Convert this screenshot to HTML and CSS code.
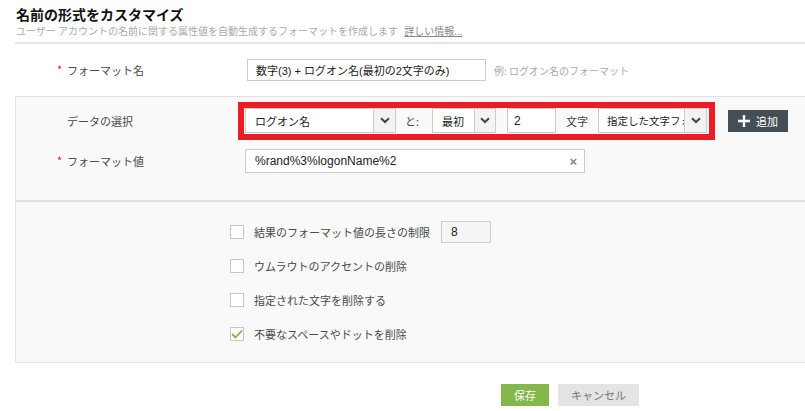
FILE: index.html
```html
<!DOCTYPE html>
<html lang="ja">
<head>
<meta charset="utf-8">
<title>名前の形式をカスタマイズ</title>
<link rel="stylesheet" href="styles.css">
</head>
<body>
<div class="page">
  <div class="header">
    <h1 class="title">名前の形式をカスタマイズ</h1>
    <p class="subtitle">ユーザー アカウントの名前に関する属性値を自動生成するフォーマットを作成します <a class="more" href="#">詳しい情報...</a></p>
  </div>

  <div class="row row-name">
    <label class="label"><span class="req">*</span>フォーマット名</label>
    <div class="textbox name-box">数字(3) + ログオン名(最初の2文字のみ)</div>
    <span class="hint">例: ログオン名のフォーマット</span>
  </div>

  <div class="panel">
    <div class="section section-top">
      <div class="prow">
        <label class="label">データの選択</label>
        <div class="highlight">
          <div class="select sel-attr"><span class="sel-text">ログオン名</span><span class="arrow"><svg width="10" height="7" viewBox="0 0 10 7"><path d="M1 1.2 L5 5 L9 1.2" fill="none" stroke="#444" stroke-width="2"/></svg></span></div>
          <span class="word to">と:</span>
          <div class="select sel-pos"><span class="sel-text">最初</span><span class="arrow"><svg width="10" height="7" viewBox="0 0 10 7"><path d="M1 1.2 L5 5 L9 1.2" fill="none" stroke="#444" stroke-width="2"/></svg></span></div>
          <div class="textbox num-box">2</div>
          <span class="word">文字</span>
          <div class="select sel-mode"><span class="sel-text">指定した文字フォーマット</span><span class="arrow"><svg width="10" height="7" viewBox="0 0 10 7"><path d="M1 1.2 L5 5 L9 1.2" fill="none" stroke="#444" stroke-width="2"/></svg></span></div>
        </div>
        <button class="add-btn"><svg width="12" height="12" viewBox="0 0 12 12"><path d="M6 0 V12 M0 6 H12" stroke="#fff" stroke-width="2.4"/></svg>追加</button>
      </div>
      <div class="prow prow-value">
        <label class="label"><span class="req">*</span>フォーマット値</label>
        <div class="textbox value-box"><span>%rand%3%logonName%2</span><span class="clear">×</span></div>
      </div>
    </div>

    <div class="section section-opts">
      <div class="opt">
        <span class="check"></span>
        <span class="opt-text">結果のフォーマット値の長さの制限</span>
        <div class="textbox len-box">8</div>
      </div>
      <div class="opt">
        <span class="check"></span>
        <span class="opt-text">ウムラウトのアクセントの削除</span>
      </div>
      <div class="opt">
        <span class="check"></span>
        <span class="opt-text">指定された文字を削除する</span>
      </div>
      <div class="opt">
        <span class="check checked"><svg width="12" height="10" viewBox="0 0 12 10"><path d="M1 5 L4.5 8.5 L11 1.5" fill="none" stroke="#7ab648" stroke-width="1.8"/></svg></span>
        <span class="opt-text">不要なスペースやドットを削除</span>
      </div>
    </div>
  </div>

  <div class="actions">
    <button class="btn save">保存</button>
    <button class="btn cancel">キャンセル</button>
  </div>
</div>
</body>
</html>
```

FILE: styles.css
```css
* { box-sizing: border-box; }
html, body { margin: 0; padding: 0; background: #fff; overflow: hidden; }
body {
  font-family: "Open Sans", "Noto Sans CJK JP", sans-serif;
  color: #333;
  width: 805px;
  height: 411px;
}
.page { padding-left: 15px; }

.header { border-bottom: 2px solid #e6e6e6; padding: 4px 0 4px 1px; }
.title {
  margin: 0;
  font-size: 14px;
  line-height: 20px;
  font-weight: bold;
  color: #111;
  font-family: "Noto Sans CJK JP", sans-serif;
}
.subtitle {
  margin: 0;
  font-size: 10px;
  line-height: 14px;
  color: #aaa;
  font-family: "Noto Sans CJK JP", sans-serif;
}
.more { color: #888; text-decoration: underline; margin-left: 4px; }

.label {
  font-size: 11px;
  color: #4a4a4a;
  font-family: "Noto Sans CJK JP", sans-serif;
  position: relative;
}
.req {
  color: #e0202a;
  position: absolute;
  left: -10px;
  top: -1px;
}

.textbox {
  background: #fff;
  border: 1px solid #ccc;
  font-size: 12px;
  color: #222;
  display: flex;
  align-items: center;
  padding-left: 9px;
  font-family: "Liberation Sans", "Noto Sans CJK JP", sans-serif;
}

.row-name {
  display: flex;
  align-items: center;
  margin-top: 15px;
  height: 22px;
}
.row-name .label { margin-left: 52px; width: 180px; }
.name-box { width: 239px; height: 22px; padding-left: 8px; font-size: 11px; white-space: nowrap; }
.hint { margin-left: 8px; font-size: 10px; color: #aaa; font-family: "Noto Sans CJK JP", sans-serif; }

.panel {
  margin-top: 15px;
  background: #f9f9f9;
  border: 1px solid #e2e2e2;
  border-right: none;
}
.section-top { padding: 5px 0 27px; border-bottom: 2px solid #e2e2e2; }

.prow { display: flex; align-items: center; }
.prow .label { margin-left: 51px; width: 171px; }
.prow-value { margin-top: 9px; }
.prow-value .label { width: 178px; }

.highlight {
  display: flex;
  align-items: center;
  border: 6px solid #ec1c24;
  padding: 0 2px 1px 1px;
  background: #f9f9f9;
}
.select {
  height: 25px;
  background: #fff;
  border: 1px solid #ccc;
  display: flex;
  align-items: stretch;
  font-size: 11px;
  color: #222;
  font-family: "Noto Sans CJK JP", sans-serif;
}
.sel-text {
  flex: 1;
  display: flex;
  align-items: center;
  padding-left: 9px;
  overflow: hidden;
  white-space: nowrap;
}
.arrow {
  flex: none;
  width: 22px;
  background: #f3f3f3;
  border-left: 1px solid #ccc;
  display: flex;
  align-items: center;
  justify-content: center;
}
.sel-attr { width: 151px; }
.sel-pos { width: 64px; }
.sel-pos .arrow { width: 21px; }
.sel-mode { width: 109px; }
.sel-mode .sel-text { padding-left: 8px; font-size: 10.5px; }
.word { font-size: 11px; color: #444; font-family: "Noto Sans CJK JP", sans-serif; margin: 0 10px; }
.to { margin: 0 9px; width: 18px; }
.num-box { width: 49px; height: 25px; margin-left: 11px; padding-left: 6px; }

.add-btn {
  margin-left: 13px;
  width: 60px;
  height: 22px;
  border: none;
  background: #434e57;
  color: #fff;
  font-size: 11px;
  font-family: "Noto Sans CJK JP", sans-serif;
  display: flex;
  align-items: center;
  justify-content: center;
  gap: 6px;
  padding: 0;
}

.value-box {
  width: 340px;
  height: 24px;
  justify-content: space-between;
  padding-right: 7px;
}
.clear { color: #888; font-size: 13px; font-weight: bold; }

.section-opts { padding: 19px 0 17px 214px; }
.opt {
  display: flex;
  align-items: center;
  height: 22px;
  margin-bottom: 12px;
}
.opt:last-child { margin-bottom: 0; }
.check {
  width: 14px;
  height: 14px;
  background: #fff;
  border: 1px solid #c6c6c6;
  display: flex;
  align-items: center;
  justify-content: center;
}
.opt-text {
  margin-left: 10px;
  font-size: 11px;
  color: #4a4a4a;
  font-family: "Noto Sans CJK JP", sans-serif;
}
.len-box { margin-left: 11px; width: 50px; height: 22px; background: #f5f5f5; }

.actions { margin-top: 21px; padding-left: 486px; display: flex; gap: 9px; }
.btn {
  height: 22px;
  border: none;
  font-size: 11px;
  font-family: "Noto Sans CJK JP", sans-serif;
  padding: 0;
}
.save { width: 48px; background: #84b84c; color: #fff; }
.cancel { width: 81px; background: #e4e4e4; color: #777; }
```
